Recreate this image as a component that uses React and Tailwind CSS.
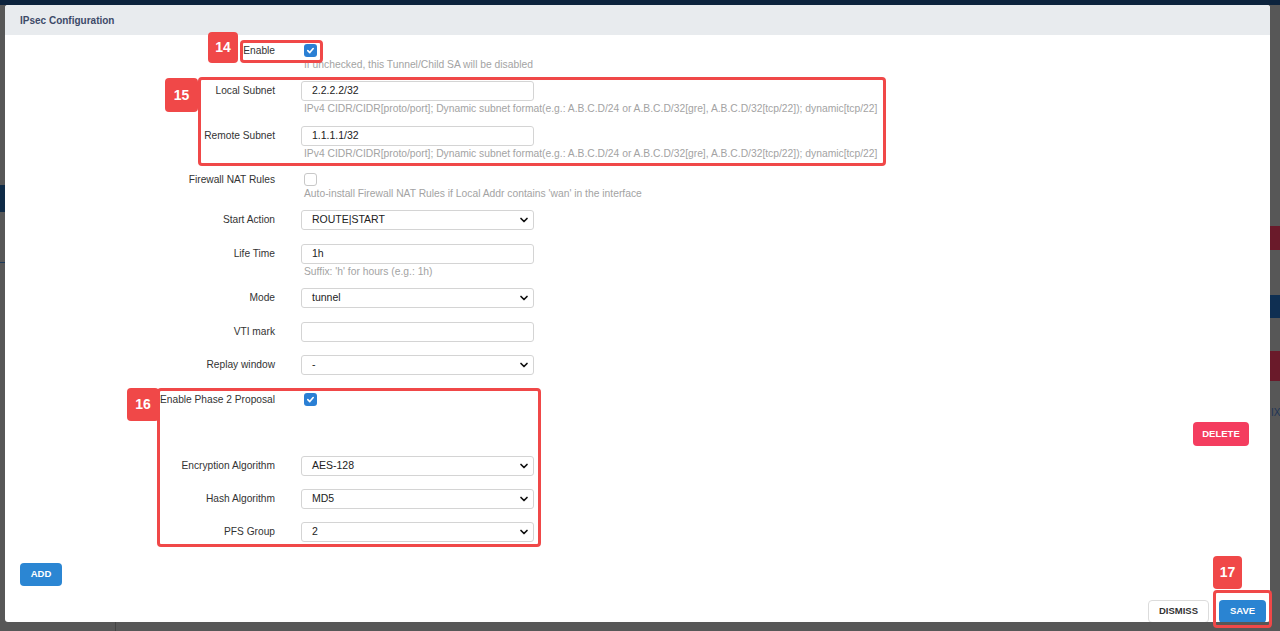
import React from "react";

const font = { fontFamily: '"Liberation Sans", Arial, sans-serif' };

function Check({ checked }) {
  if (checked) {
    return (
      <div className="w-[13px] h-[13px] rounded-[3px] bg-[#2a7fd4] flex items-center justify-center">
        <svg width="9" height="9" viewBox="0 0 10 10">
          <path d="M2 5.2 L4.2 7.3 L8 2.8" fill="none" stroke="white" strokeWidth="1.8" strokeLinecap="round" strokeLinejoin="round" />
        </svg>
      </div>
    );
  }
  return <div className="w-[13px] h-[13px] rounded-[3px] bg-white border border-[#c8c8c8]" />;
}

function Input({ value }) {
  return (
    <div className="w-[233px] h-[20px] border border-[#d4d4d4] rounded-[3px] bg-white flex items-center pl-[10px] text-[10.5px] text-[#222]">
      {value}
    </div>
  );
}

function Select({ value }) {
  return (
    <div className="w-[233px] h-[20px] border border-[#d4d4d4] rounded-[3px] bg-white flex items-center justify-between pl-[10px] pr-[4px] text-[10.5px] text-[#222]">
      <span>{value}</span>
      <svg width="10" height="10" viewBox="0 0 10 10">
        <path d="M2 3.5 L5 6.5 L8 3.5" fill="none" stroke="#111" strokeWidth="1.7" strokeLinecap="round" strokeLinejoin="round" />
      </svg>
    </div>
  );
}

function Row({ label, children, help, mt }) {
  return (
    <div className="flex" style={{ marginTop: mt }}>
      <div className="w-[270px] text-right text-[10.2px] text-[#333] leading-[20px] shrink-0">
        {label}
      </div>
      <div className="ml-[26px] flex flex-col">
        {children}
        {help && (
          <div className="mt-[2px] pl-[3px] text-[10.3px] leading-[12px] text-[#a3a3a3] whitespace-nowrap">{help}</div>
        )}
      </div>
    </div>
  );
}

function CheckRow({ label, checked, help, mt }) {
  return (
    <div className="flex" style={{ marginTop: mt }}>
      <div className="w-[270px] text-right text-[10.2px] text-[#333] leading-[13px] shrink-0">
        {label}
      </div>
      <div className="ml-[29px] flex flex-col">
        <Check checked={checked} />
        {help && (
          <div className="mt-[2px] text-[10.3px] leading-[12px] text-[#a3a3a3] whitespace-nowrap">{help}</div>
        )}
      </div>
    </div>
  );
}

function Badge({ n, className }) {
  return (
    <div className={`absolute bg-[#f04848] rounded-[4px] text-white text-[14px] font-semibold flex items-center justify-center ${className}`}>
      {n}
    </div>
  );
}

function Box({ className }) {
  return <div className={`absolute border-[3px] border-[#f04848] rounded-[4px] ${className}`} />;
}

const subnetHelp =
  "IPv4 CIDR/CIDR[proto/port]; Dynamic subnet format(e.g.: A.B.C.D/24 or A.B.C.D/32[gre], A.B.C.D/32[tcp/22]); dynamic[tcp/22]";

export default function App() {
  return (
    <div className="relative w-[1280px] h-[631px] overflow-hidden bg-[#575757]" style={font}>
      {/* dimmed background page */}
      <div className="h-[5px] bg-[#0c233d]" />
      <div className="absolute left-0 top-[185px] w-[6px] h-[27px] bg-[#0f2b47]" />
      <div className="absolute left-0 top-[262px] w-[6px] h-[1px] bg-[#1d3a5a]" />
      <div className="absolute left-[1270px] top-[226px] w-[10px] h-[24px] bg-[#6a1a2a]" />
      <div className="absolute left-[1270px] top-[295px] w-[10px] h-[23px] bg-[#0f2f52]" />
      <div className="absolute left-[1270px] top-[351px] w-[10px] h-[30px] bg-[#6a1a2a]" />
      <div className="absolute left-[1271px] top-[405px] text-[10px] text-[#1d3557]">IX</div>
      <div className="absolute left-[115px] top-[622px] w-[1px] h-[9px] bg-[#444]" />

      {/* modal */}
      <div className="absolute left-[5px] top-[5px] w-[1265px] h-[617px] bg-white rounded-[3px] flex flex-col overflow-hidden">
        <div className="h-[30px] bg-[#e8ebee] flex items-center pl-[15px] text-[10px] font-bold text-[#3d4a68] shrink-0">
          IPsec Configuration
        </div>
        <div className="flex justify-between">
          <div className="flex flex-col">
            <CheckRow label="Enable" checked mt={9} help="If unchecked, this Tunnel/Child SA will be disabled" />
            <Row label="Local Subnet" mt={10} help={subnetHelp}>
              <Input value="2.2.2.2/32" />
            </Row>
            <Row label="Remote Subnet" mt={11} help={subnetHelp}>
              <Input value="1.1.1.1/32" />
            </Row>
            <CheckRow label="Firewall NAT Rules" mt={13} help="Auto-install Firewall NAT Rules if Local Addr contains 'wan' in the interface" />
            <Row label="Start Action" mt={10}>
              <Select value="ROUTE|START" />
            </Row>
            <Row label="Life Time" mt={14} help="Suffix: 'h' for hours (e.g.: 1h)">
              <Input value="1h" />
            </Row>
            <Row label="Mode" mt={10}>
              <Select value="tunnel" />
            </Row>
            <Row label="VTI mark" mt={14}>
              <Input value="" />
            </Row>
            <Row label="Replay window" mt={13}>
              <Select value="-" />
            </Row>
            <CheckRow label="Enable Phase 2 Proposal" checked mt={18} />
            <Row label="Encryption Algorithm" mt={50}>
              <Select value="AES-128" />
            </Row>
            <Row label="Hash Algorithm" mt={13}>
              <Select value="MD5" />
            </Row>
            <Row label="PFS Group" mt={13}>
              <Select value="2" />
            </Row>
          </div>
          <div className="pt-[385px] pr-[21px]">
            <button className="w-[56px] h-[24px] rounded-[4px] bg-[#f43d5f] text-white text-[9.5px] font-bold">DELETE</button>
          </div>
        </div>
        <div className="pl-[15px] mt-[18px]">
          <button className="w-[42px] h-[23px] rounded-[4px] bg-[#2b86d3] text-white text-[9.5px] font-bold">ADD</button>
        </div>
        <div className="flex justify-end gap-[10px] pr-[4px] mt-[14px]">
          <button className="w-[61px] h-[23px] rounded-[4px] bg-white border border-[#dcdcdc] text-[#333] text-[9.5px] font-bold">DISMISS</button>
          <button className="w-[47px] h-[23px] rounded-[4px] bg-[#2a84d2] text-white text-[9.5px] font-bold">SAVE</button>
        </div>
      </div>

      {/* annotations */}
      <Box className="left-[240px] top-[40px] w-[83px] h-[23px]" />
      <Badge n="14" className="left-[208px] top-[32px] w-[30px] h-[31px]" />
      <Box className="left-[198px] top-[77px] w-[688px] h-[89px]" />
      <Badge n="15" className="left-[165px] top-[78px] w-[33px] h-[34px]" />
      <Box className="left-[157px] top-[388px] w-[384px] h-[159px]" />
      <Badge n="16" className="left-[127px] top-[388px] w-[32px] h-[33px]" />
      <Box className="left-[1213px] top-[590px] w-[59px] h-[38px]" />
      <Badge n="17" className="left-[1213px] top-[556px] w-[29px] h-[33px]" />
    </div>
  );
}
